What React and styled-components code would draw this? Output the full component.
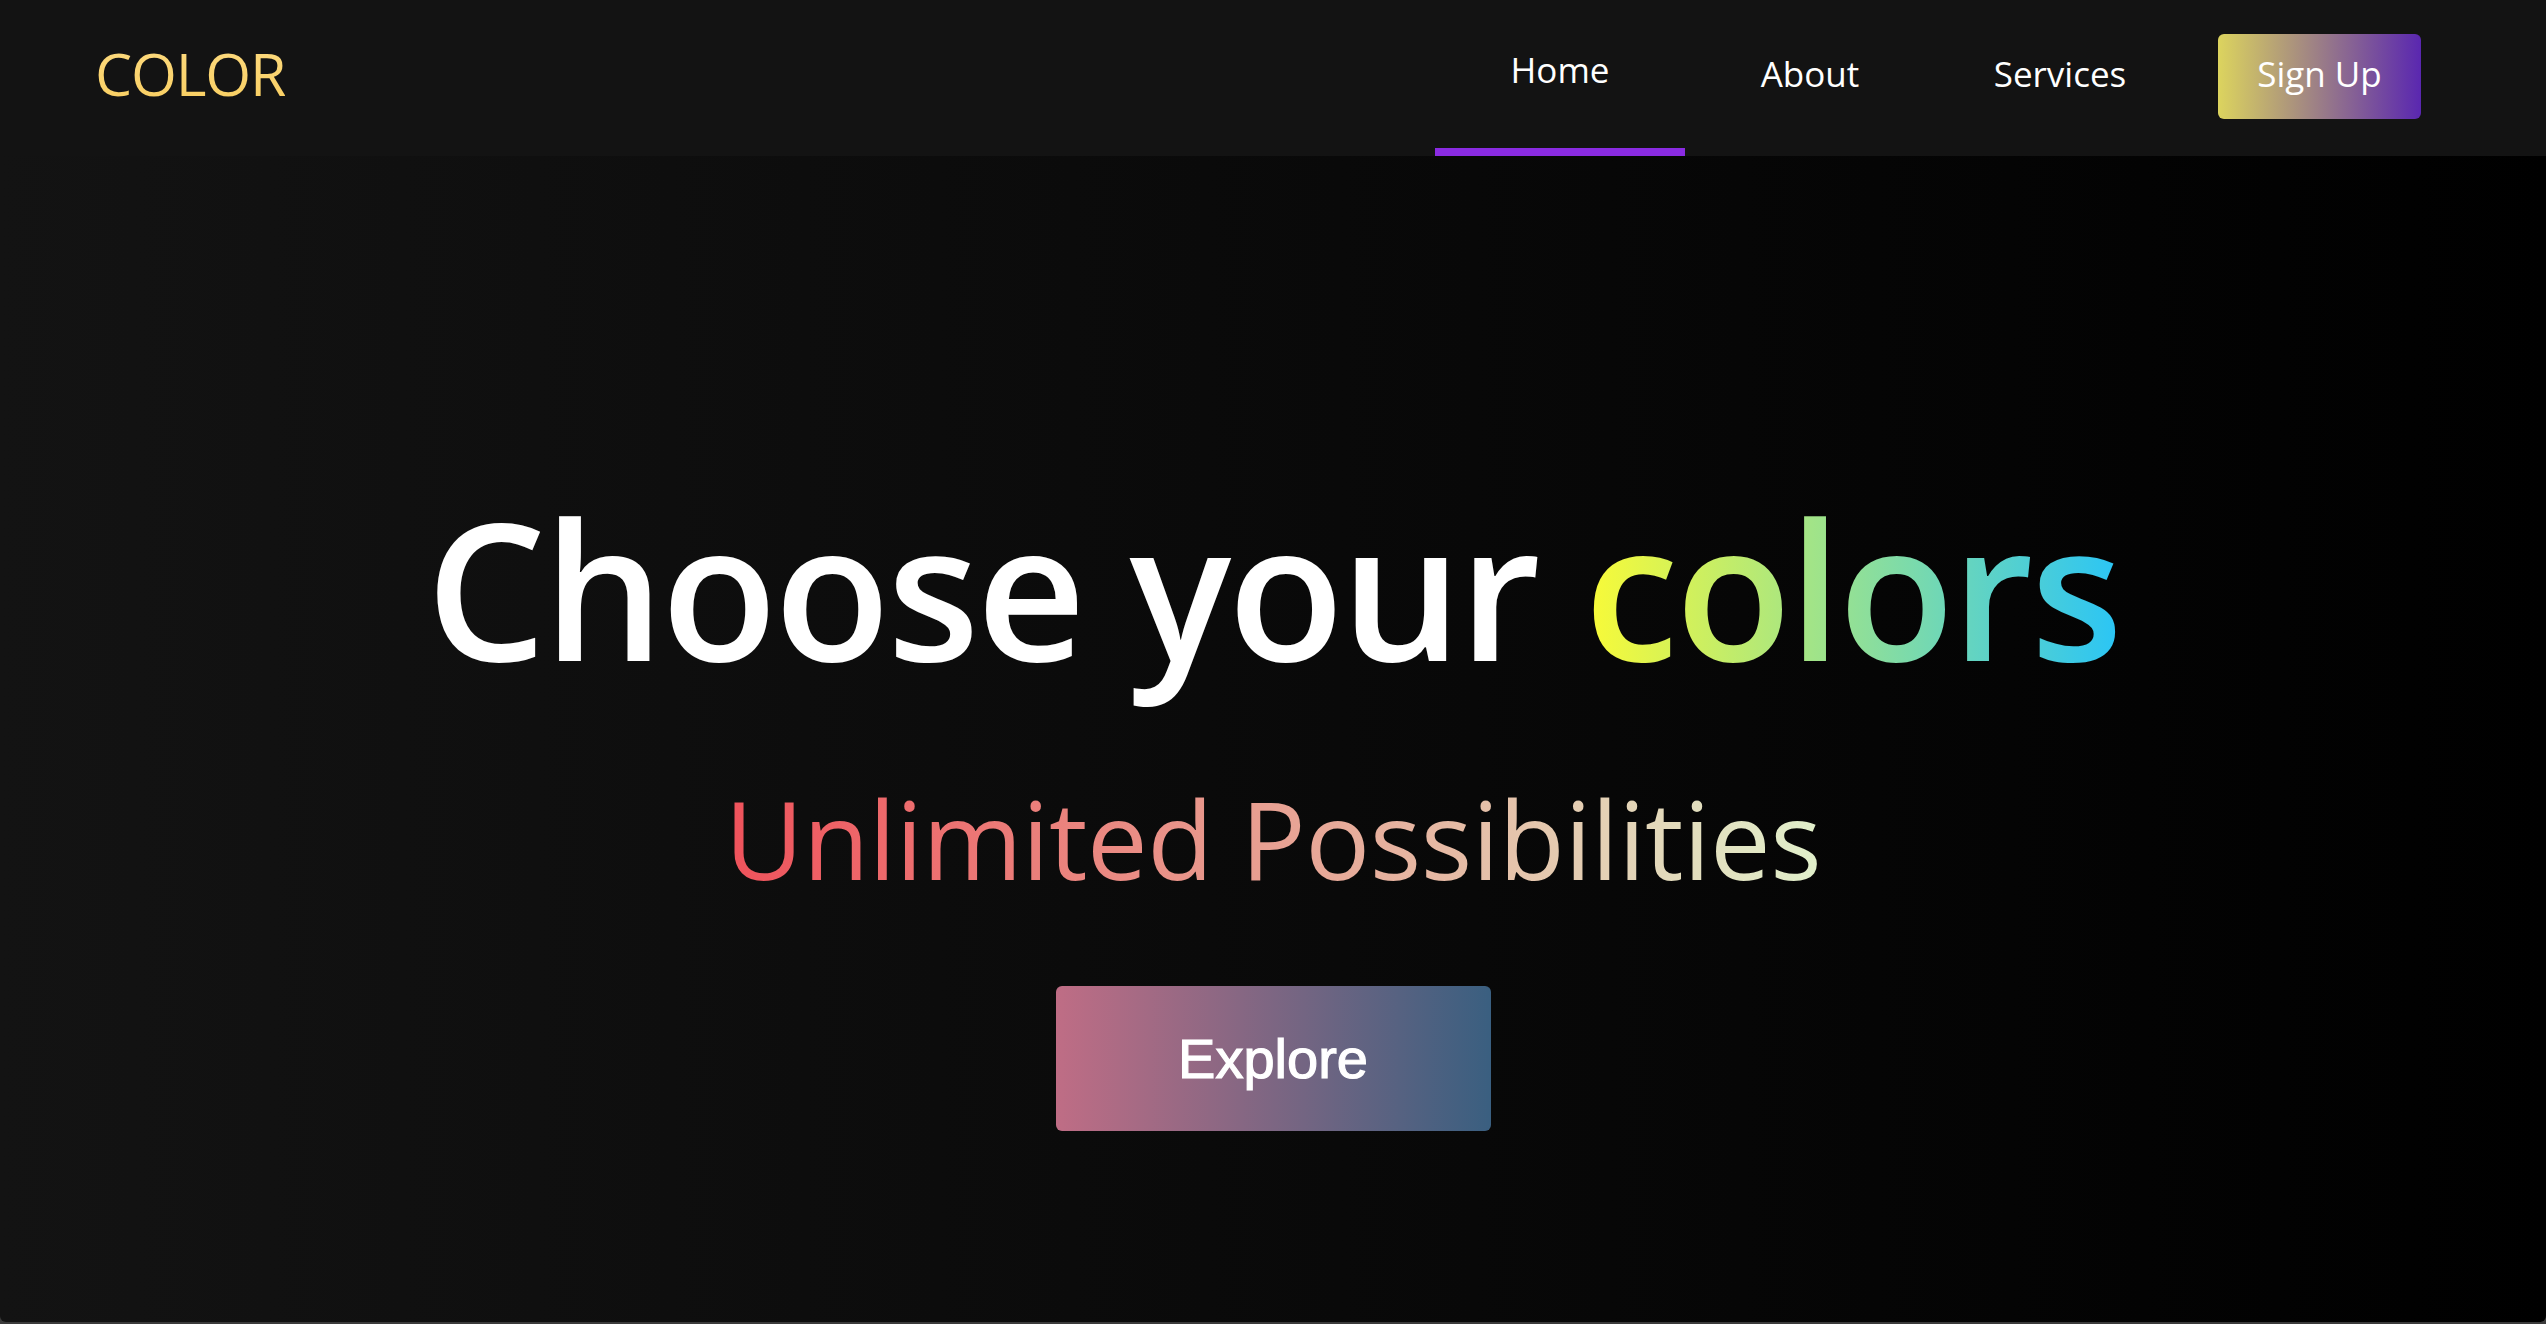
import React from "react";
import styled, { createGlobalStyle } from "styled-components";

const GlobalStyle = createGlobalStyle`
  * { box-sizing: border-box; }
  html, body { margin: 0; padding: 0; }
  body {
    background: #3b3b3b;
    font-family: "Open Sans", "Noto Sans", sans-serif;
  }
`;

const Page = styled.div`
  height: 1322px;
  display: flex;
  flex-direction: column;
  border-radius: 0 0 6px 6px;
  overflow: hidden;
`;

const NavBar = styled.header`
  height: 156px;
  flex: none;
  background: #131313;
  display: flex;
  align-items: center;
  justify-content: space-between;
  padding: 0 125px 0 95px;
`;

const Logo = styled.div`
  font-size: 59px;
  letter-spacing: -1.2px;
  padding-bottom: 10px;
  background: linear-gradient(to bottom, #fddc84, #f8cb58);
  -webkit-background-clip: text;
  background-clip: text;
  color: transparent;
`;

const NavRight = styled.nav`
  display: flex;
  align-items: center;
  height: 100%;
`;

const NavLink = styled.a`
  width: 250px;
  height: 100%;
  display: flex;
  align-items: center;
  justify-content: center;
  padding-bottom: 10px;
  color: #ffffff;
  font-size: 35px;
  text-decoration: none;
  border-bottom: ${(p) => (p.$active ? "8px solid #8a2be2" : "0")};
`;

const SignUp = styled.button`
  margin-left: 33px;
  width: 203px;
  height: 85px;
  margin-bottom: 3px;
  border: 0;
  border-radius: 6px;
  background: linear-gradient(to right, #dcd45e, #5a27b0);
  color: #ffffff;
  font-family: "Open Sans", sans-serif;
  font-size: 35px;
  padding: 0 0 6px;
`;

const Hero = styled.main`
  flex: 1;
  background: linear-gradient(to right, #131313, #000000);
  display: flex;
  flex-direction: column;
  align-items: center;
  padding-top: 302px;
`;

const Title = styled.h1`
  margin: 0;
  font-size: 190px;
  font-weight: 600;
  letter-spacing: -3px;
  color: #ffffff;
  line-height: normal;
`;

const Rainbow = styled.span`
  background: linear-gradient(to right, #fafb36, #2ac5f6);
  -webkit-background-clip: text;
  background-clip: text;
  color: transparent;
`;

const Subtitle = styled.h2`
  margin: 48px 0 0;
  font-size: 108px;
  font-weight: 400;
  letter-spacing: -0.4px;
  line-height: normal;
  background: linear-gradient(to right, #ef525b, #e1f0cb);
  -webkit-background-clip: text;
  background-clip: text;
  color: transparent;
`;

const Explore = styled.button`
  margin-top: 74px;
  width: 435px;
  height: 145px;
  border: 0;
  border-radius: 6px;
  background: linear-gradient(to right, #bf6d85, #3a5f80);
  color: #ffffff;
  -webkit-text-stroke: 1.2px #ffffff;
  font-family: "Liberation Sans", Arial, sans-serif;
  font-size: 56px;
`;

export default function App() {
  return (
    <>
      <GlobalStyle />
      <Page>
        <NavBar>
          <Logo>COLOR</Logo>
          <NavRight>
            <NavLink $active href="#">Home</NavLink>
            <NavLink href="#">About</NavLink>
            <NavLink href="#">Services</NavLink>
            <SignUp>Sign Up</SignUp>
          </NavRight>
        </NavBar>
        <Hero>
          <Title>
            Choose your <Rainbow>colors</Rainbow>
          </Title>
          <Subtitle>Unlimited Possibilities</Subtitle>
          <Explore>Explore</Explore>
        </Hero>
      </Page>
    </>
  );
}
